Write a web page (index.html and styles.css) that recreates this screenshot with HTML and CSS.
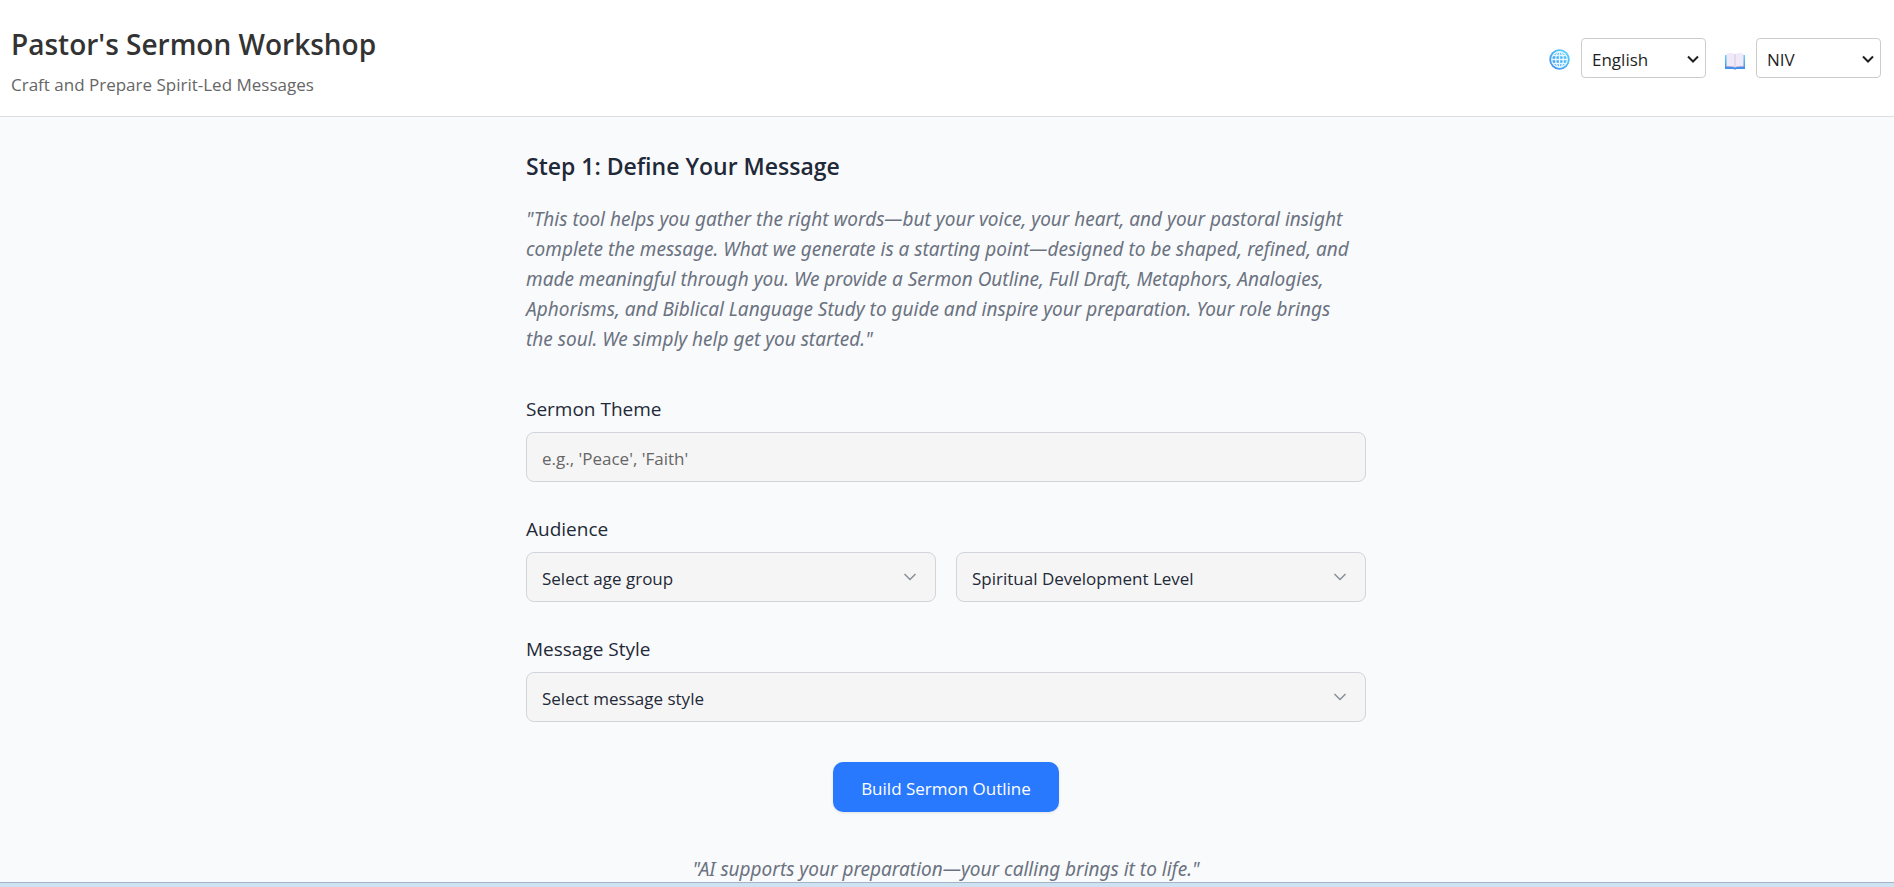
FILE: index.html
```html
<!DOCTYPE html>
<html lang="en">
<head>
<meta charset="utf-8">
<meta name="viewport" content="width=device-width, initial-scale=1">
<title>Pastor's Sermon Workshop</title>
<link rel="stylesheet" href="styles.css">
</head>
<body>
<header class="site-header">
  <div class="brand">
    <h1 class="brand-title">Pastor's Sermon Workshop</h1>
    <p class="brand-tagline">Craft and Prepare Spirit-Led Messages</p>
  </div>
  <div class="preferences">
    <div class="preference">
      <svg class="preference-icon" viewBox="0 0 22 22" aria-hidden="true">
        <defs><linearGradient id="sea" x1="0" y1="1" x2="1" y2="0"><stop offset="0" stop-color="#3f86ee"/><stop offset=".5" stop-color="#45b2f8"/><stop offset="1" stop-color="#5cdaff"/></linearGradient></defs>
        <circle cx="10.500" cy="12.500" r="10.200" fill="url(#sea)"/>
        <g fill="none" stroke="#e8f6ff" stroke-width="1.300">
          <circle cx="10.500" cy="12.500" r="7.800"/>
          <ellipse cx="10.500" cy="12.500" rx="3.800" ry="7.800"/>
          <path d="M10.500 4.700v15.600M2.700 12.500h15.600M4.500 8.500h12M4.500 16.500h12"/>
        </g>
      </svg>
      <select class="preference-select" aria-label="Language"><option>English</option></select>
    </div>
    <div class="preference">
      <svg class="preference-icon" viewBox="0 0 22 22" aria-hidden="true">
        <defs><linearGradient id="cover" x1="0" y1="0" x2="0" y2="1"><stop offset="0" stop-color="#68d2f6"/><stop offset="1" stop-color="#3c8ce8"/></linearGradient></defs>
        <path d="M1 8h20v14h-8.500q-1.500 1-3 0H1z" fill="url(#cover)"/>
        <path d="M2.500 18.700h7q1.500.2 1.500 1.500.2-1.300 1.500-1.500h7v1.200h-7l-1.500 1-1.500-1h-7z" fill="#b8a6d8"/>
        <path d="M2.500 6.500q5-1 8.500.6 3.500-1.600 8.500-.6v12.600q-5-.5-8.500.9-3.500-1.400-8.500-.9z" fill="#f0eaf8"/>
        <path d="M11 7v12.700" stroke="#d3c6e6" stroke-width="1"/>
      </svg>
      <select class="preference-select" aria-label="Bible translation"><option>NIV</option></select>
    </div>
  </div>
</header>
<main class="page">
  <form class="workshop">
    <h2 class="step-title">Step 1: Define Your Message</h2>
    <p class="quote">"This tool helps you gather the right words—but your voice, your heart, and your pastoral insight complete the message. What we generate is a starting point—designed to be shaped, refined, and made meaningful through you. We provide a Sermon Outline, Full Draft, Metaphors, Analogies, Aphorisms, and Biblical Language Study to guide and inspire your preparation. Your role brings the soul. We simply help get you started."</p>
    <div class="fields">
      <div class="field">
        <label class="field-label" for="theme">Sermon Theme</label>
        <input class="control" id="theme" type="text" placeholder="e.g., 'Peace', 'Faith'">
      </div>
      <div class="field">
        <label class="field-label" for="age">Audience</label>
        <div class="control-row">
          <select class="control control-select" id="age"><option>Select age group</option></select>
          <select class="control control-select" aria-label="Spiritual Development Level"><option>Spiritual Development Level</option></select>
        </div>
      </div>
      <div class="field">
        <label class="field-label" for="style">Message Style</label>
        <select class="control control-select" id="style"><option>Select message style</option></select>
      </div>
    </div>
    <button class="submit" type="button">Build Sermon Outline</button>
    <p class="quote quote-closing">"AI supports your preparation—your calling brings it to life."</p>
  </form>
</main>
<footer class="bottom-strip"></footer>
</body>
</html>
```
FILE: styles.css
```css
* { box-sizing: border-box; }

body {
  margin: 0;
  height: 100vh;
  display: flex;
  flex-direction: column;
  overflow: hidden;
  background: #f9fafc;
  color: #1f2937;
  font-family: "Segoe UI", "Open Sans", "Noto Sans", sans-serif;
  font-size: 17px;
}

h1, h2, p { margin: 0; }

.site-header {
  display: flex;
  justify-content: space-between;
  align-items: center;
  padding: 23px 13px 17px 11px;
  background: #fff;
  border-bottom: 1px solid #dcdfe3;
}

.brand-title {
  font-size: 28px;
  line-height: 42px;
  font-weight: 600;
  color: #333;
}

.brand-tagline {
  margin-top: 6px;
  font-size: 17px;
  line-height: 28px;
  color: #666;
}

.preferences {
  display: flex;
  gap: 18px;
  align-self: flex-start;
  padding-top: 15px;
}

.preference { display: flex; align-items: center; gap: 10px; }

.preference-icon { width: 22px; height: 22px; overflow: visible; }

.preference-select {
  appearance: none;
  width: 125px;
  height: 40px;
  padding: 2px 10px 0;
  border: 1px solid #ccc;
  border-radius: 4px;
  background: #fff url("data:image/svg+xml,%3Csvg xmlns='http://www.w3.org/2000/svg' width='12' height='8' fill='none' stroke='%231f1f1f' stroke-width='2'%3E%3Cpath d='M1 1.500l5 5 5-5'/%3E%3C/svg%3E") no-repeat right 6px top 16px;
  color: #1f1f1f;
  font-family: inherit;
  font-size: 17px;
}

.page {
  flex: 1;
  min-height: 0;
  overflow: hidden;
  padding: 31px 26px 0 24px;
}

.workshop {
  display: flex;
  flex-direction: column;
  max-width: 840px;
  margin: 0 auto;
}

.step-title {
  font-size: 23px;
  line-height: 36px;
  font-weight: 600;
}

.quote {
  margin-top: 20px;
  padding-right: 10px;
  font-family: "Segoe UI", "Noto Sans", "Open Sans", sans-serif;
  font-size: 19px;
  line-height: 30px;
  font-style: italic;
  color: #6b7280;
}

.fields {
  display: flex;
  flex-direction: column;
  gap: 32px;
  margin-top: 40px;
}

.field { display: flex; flex-direction: column; gap: 8px; }

.field-label { font-size: 19px; line-height: 30px; }

.control-row {
  display: grid;
  grid-template-columns: 1fr 1fr;
  gap: 20px;
}

.control {
  width: 100%;
  height: 50px;
  padding: 2px 15px 0;
  border: 1px solid #d1d5db;
  border-radius: 8px;
  background: #f5f5f5;
  color: #1f2937;
  font-family: inherit;
  font-size: 17px;
}

.control::placeholder { color: #666; }

.control-select {
  appearance: none;
  background: #f5f5f5 url("data:image/svg+xml,%3Csvg xmlns='http://www.w3.org/2000/svg' width='14' height='8' fill='none' stroke='%23888e98' stroke-width='1.500'%3E%3Cpath d='M1.500 1l5.500 5.500L12.500 1'/%3E%3C/svg%3E") no-repeat right 18px center;
}

.submit {
  align-self: center;
  height: 50px;
  margin-top: 40px;
  padding: 2px 28px 0;
  border: 0;
  border-radius: 10px;
  background: #2979ff;
  box-shadow: 0 1px 3px rgba(0, 0, 0, 0.1);
  color: #fff;
  font-family: inherit;
  font-size: 17px;
}

.quote-closing {
  margin-top: 42px;
  padding-right: 0;
  text-align: center;
}

.bottom-strip {
  height: 5px;
  background: #cfe2f2;
  border-top: 1px solid #a3b4c6;
}
```
